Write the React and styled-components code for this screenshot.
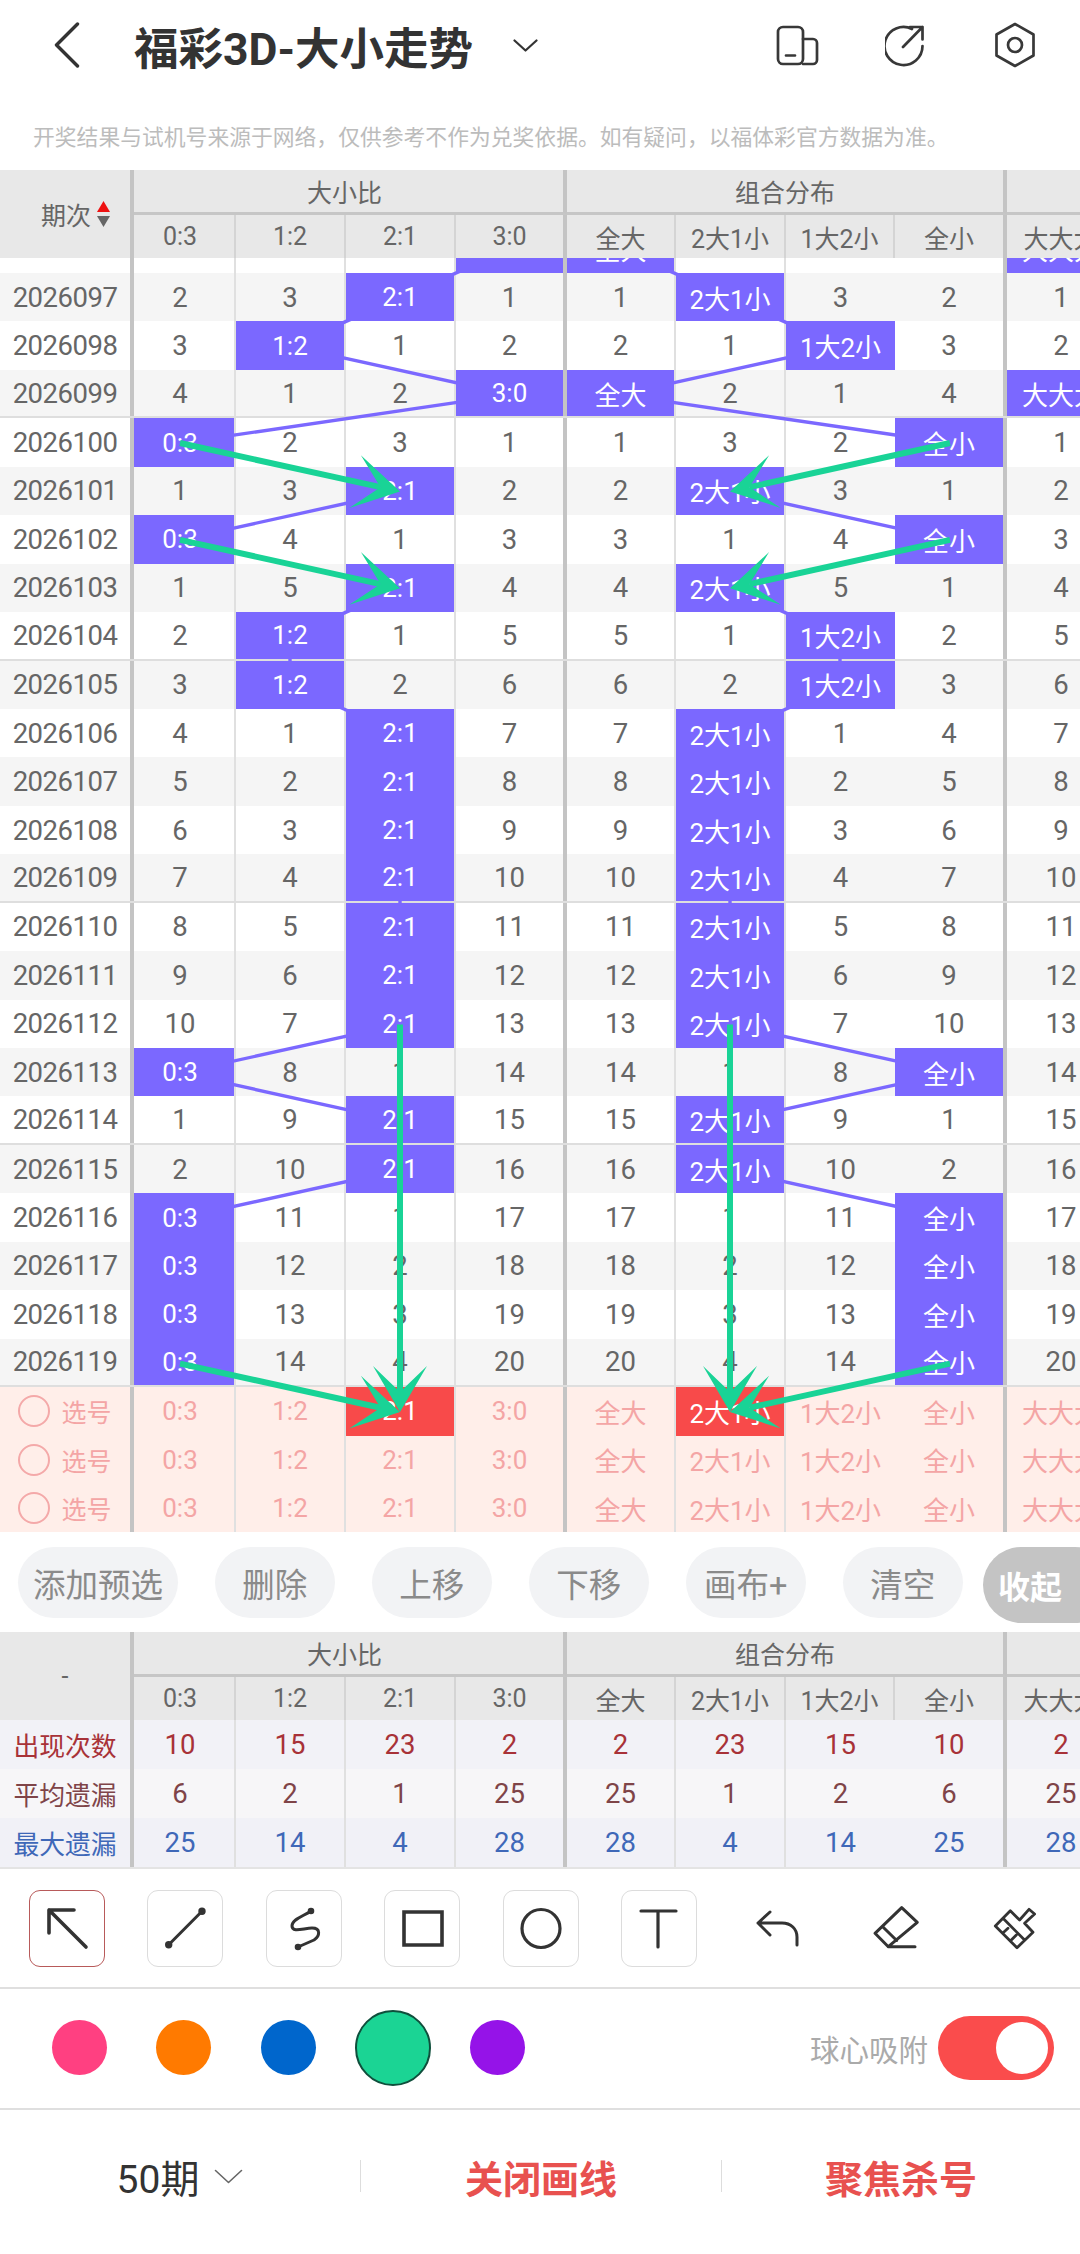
import React from "react";
import styled, { createGlobalStyle } from "styled-components";

const ROW_H = 48.45;
const TRACKS = "126px 110px 110px 110px 111px 109px 110px 109px 112px 110px";
const CENTERS = [180, 290, 400, 510, 620, 730, 840, 950, 1062];
const COLUMNS = ["0:3", "1:2", "2:1", "3:0", "全大", "2大1小", "1大2小", "全小", "大大大"];
const SOURCE = [0, 1, 2, 3, 3, 2, 1, 0, 3];
const HITS = [3, 2, 1, 3, 0, 2, 0, 2, 1, 1, 2, 2, 2, 2, 2, 2, 2, 0, 2, 2, 0, 0, 0, 0];
const STATS = [
  { label: "出现次数", values: [10, 15, 23, 2], color: "#a83238", bg: "#f2f2f7" },
  { label: "平均遗漏", values: [6, 2, 1, 25], color: "#7f4448", bg: "#f7f6f8" },
  { label: "最大遗漏", values: [25, 14, 4, 28], color: "#3f68b8", bg: "#f1f1f7" },
];
const ACTIONS = ["添加预选", "删除", "上移", "下移", "画布+", "清空"];
const SWATCHES = ["#ff4081", "#ff7a00", "#0066cc", "#1bd494", "#9513e8"];

const rowData = (() => {
  const miss = [0, 1, 2, 0];
  return HITS.map((hit, i) => {
    miss.forEach((_, c) => {
      miss[c] = c === hit ? 0 : miss[c] + 1;
    });
    return { issue: 2026096 + i, hit, miss: [...miss] };
  });
})();

const rowCenter = (i) => i * ROW_H + ROW_H / 2;

const GlobalStyle = createGlobalStyle`
  html, body {
    margin: 0;
    padding: 0;
    background: #fff;
  }
  body {
    font-family: Roboto, "Noto Sans CJK SC", sans-serif;
    color: #666;
  }
`;

const Page = styled.div`
  width: 1080px;
  height: 2254px;
  overflow: hidden;
  position: relative;
  background: #fff;
`;

const TopBar = styled.header`
  height: 90px;
  display: flex;
  align-items: center;
  padding: 0 42px 0 54px;
`;

const Title = styled.h1`
  margin: 0 40px 0 54px;
  font-size: 44.5px;
  font-weight: 700;
  color: #333;
  white-space: nowrap;
`;

const TopIcons = styled.div`
  margin-left: auto;
  display: flex;
  gap: 65px;
`;

const Notice = styled.p`
  margin: 0;
  height: 80px;
  padding: 36px 0 0 33px;
  box-sizing: border-box;
  font-size: 21.8px;
  line-height: 24px;
  color: #bcbcbc;
  white-space: nowrap;
`;

const HeadGrid = styled.div`
  display: grid;
  grid-template-columns: ${TRACKS};
  grid-template-rows: 45px 43px;
  width: 1080px;
  overflow: hidden;
  background: #e8e8e8;
  position: relative;
  z-index: 4;
`;

const HeadLabel = styled.div`
  grid-row: 1 / span 2;
  grid-column: 1;
  width: 134px;
  box-sizing: border-box;
  border-right: 4px solid #c4c4c4;
  background: #e8e8e8;
  position: relative;
  z-index: 2;
  display: flex;
  align-items: center;
  justify-content: ${(p) => (p.$center ? "center" : "flex-start")};
  padding-left: ${(p) => (p.$center ? "0" : "41px")};
  font-size: 25px;
  color: #666;
`;

const SortMarks = styled.svg`
  margin-left: 6px;
`;

const GroupCell = styled.div`
  grid-column: span ${(p) => p.$span};
  display: flex;
  align-items: center;
  justify-content: center;
  font-size: 25px;
  color: #666;
  box-sizing: border-box;
  border-bottom: 3px solid #c6c6c6;
  border-right: ${(p) => (p.$edge ? "4px solid #c4c4c4" : "none")};
`;

const SubCell = styled.div`
  display: flex;
  align-items: center;
  justify-content: center;
  font-size: 25px;
  color: #666;
  white-space: nowrap;
  box-sizing: border-box;
  border-right: ${(p) => (p.$edge ? "4px solid #c4c4c4" : "2px solid #d4d4d4")};
`;

const TrendBody = styled.div`
  height: 1275px;
  overflow: hidden;
`;

const Rows = styled.div`
  margin-top: -33.45px;
  position: relative;
  z-index: 0;
`;

const Row = styled.div`
  display: grid;
  grid-template-columns: ${TRACKS};
  width: 1080px;
  height: ${(p) => p.$height || ROW_H}px;
  box-sizing: border-box;
  overflow: hidden;
  background: ${(p) => p.$bg};
  border-bottom: ${(p) => (p.$ruled ? "2px solid #dedede" : "none")};
`;

const LabelCell = styled.div`
  grid-column: 1;
  grid-row: 1;
  width: 134px;
  box-sizing: border-box;
  border-right: 4px solid #c4c4c4;
  background: ${(p) => p.$bg};
  position: relative;
  z-index: 3;
  display: flex;
  align-items: center;
  justify-content: center;
  gap: ${(p) => p.$gap || 0}px;
  font-size: ${(p) => p.$size || 27.5}px;
  letter-spacing: ${(p) => (p.$size ? 0 : -0.5)}px;
  color: ${(p) => p.$color || "#666"};
  white-space: nowrap;
`;

const Cell = styled.div`
  grid-row: 1;
  grid-column: ${(p) => p.$col};
  display: flex;
  align-items: center;
  justify-content: center;
  box-sizing: border-box;
  font-size: ${(p) => (p.$number ? 27.5 : 26)}px;
  color: ${(p) => p.$color || "#666"};
  white-space: nowrap;
  border-right: ${(p) =>
    p.$edge ? "4px solid #c4c4c4" : p.$plain ? "none" : "2px solid #e0e0e0"};
`;

const HitFill = styled.div`
  align-self: stretch;
  flex: 1;
  display: flex;
  align-items: center;
  justify-content: center;
  position: relative;
  z-index: 2;
  color: #fff;
  background: ${(p) => p.$bg};
`;

const Overlay = styled.svg`
  position: absolute;
  left: 0;
  top: 0;
  pointer-events: none;
  z-index: ${(p) => p.$layer};
`;

const PickRing = styled.span`
  width: 28px;
  height: 28px;
  border: 2px solid #f4a9a9;
  border-radius: 50%;
`;

const ActionBar = styled.div`
  height: 99px;
  position: relative;
  display: flex;
  gap: 36.5px;
  padding: 14px 0 0 18px;
  box-sizing: border-box;
`;

const ActionPill = styled.button`
  height: 71px;
  padding: 0 15px;
  min-width: 120.5px;
  border: none;
  border-radius: 36px;
  background: #f2f3f5;
  font: inherit;
  font-size: 32.5px;
  color: #8a8a8a;
`;

const CollapseButton = styled.button`
  position: absolute;
  left: 983px;
  top: 14px;
  width: 130px;
  height: 76px;
  padding: 0 0 0 15px;
  text-align: left;
  border: none;
  border-radius: 38px;
  background: #c4c4c4;
  font: inherit;
  font-size: 32px;
  font-weight: 700;
  color: #fff;
`;

const StatBlock = styled.section`
  border-bottom: 2px solid #e4e4e4;
`;

const ToolBar = styled.div`
  height: 120px;
  box-sizing: border-box;
  display: flex;
  gap: 42.6px;
  padding: 21px 0 0 28.5px;
  border-bottom: 2px solid #dfdfdf;
`;

const ToolButton = styled.button`
  width: 76px;
  height: 77px;
  padding: 0;
  box-sizing: border-box;
  background: #fff;
  border: ${(p) => (p.$bare ? "none" : `1px solid ${p.$active ? "#b85a5a" : "#dcdcdc"}`)};
  border-radius: 11px;
  display: block;
  svg {
    display: block;
    margin: ${(p) => (p.$bare ? "0" : "-1px")};
  }
`;

const ColorBar = styled.div`
  height: 121px;
  box-sizing: border-box;
  display: flex;
  align-items: center;
  padding: 0 26px 2px 27px;
  border-bottom: 2px solid #dfdfdf;
`;

const SwatchSlot = styled.div`
  width: 104.5px;
  display: flex;
  justify-content: center;
`;

const Swatch = styled.span`
  display: block;
  box-sizing: border-box;
  width: ${(p) => (p.$active ? 76 : 55)}px;
  height: ${(p) => (p.$active ? 76 : 55)}px;
  border-radius: 50%;
  background: ${(p) => p.$color};
  border: ${(p) => (p.$active ? "2px solid #0f4f3c" : "none")};
`;

const SnapGroup = styled.div`
  margin-left: auto;
  display: flex;
  align-items: center;
  gap: 10px;
  font-size: 29.5px;
  color: #aaa;
`;

const Toggle = styled.span`
  width: 116px;
  height: 64px;
  box-sizing: border-box;
  padding: 6px;
  border-radius: 32px;
  background: #fa4c4c;
  display: flex;
  justify-content: flex-end;
  &::after {
    content: "";
    width: 52px;
    height: 52px;
    border-radius: 50%;
    background: #fff;
  }
`;

const BottomBar = styled.div`
  display: grid;
  grid-template-columns: 360px 361px 359px;
  padding-top: 50px;
`;

const BottomItem = styled.div`
  height: 32px;
  display: flex;
  align-items: center;
  justify-content: center;
  gap: 15px;
  font-size: ${(p) => (p.$accent ? 38 : 39)}px;
  font-weight: ${(p) => (p.$accent ? 700 : 400)};
  color: ${(p) => (p.$accent ? "#e8514f" : "#333")};
  border-left: ${(p) => (p.$split ? "1px solid #ddd" : "none")};
`;

function Caret({ width, height, stroke, strokeWidth }) {
  return (
    <svg width={width} height={height} viewBox={`0 0 ${width} ${height}`} fill="none">
      <path
        d={`M1.5 1.5L${width / 2} ${height - 1.5}L${width - 1.5} 1.5`}
        stroke={stroke}
        strokeWidth={strokeWidth}
        strokeLinecap="round"
        strokeLinejoin="round"
      />
    </svg>
  );
}

function TopIcon({ children }) {
  return (
    <svg
      width="44"
      height="46"
      viewBox="0 0 44 46"
      fill="none"
      stroke="#383838"
      strokeWidth="2.7"
      strokeLinecap="round"
      strokeLinejoin="round"
    >
      {children}
    </svg>
  );
}

function ToolIcon({ children, strokeWidth = 3 }) {
  return (
    <svg
      width="76"
      height="77"
      viewBox="0 0 76 77"
      fill="none"
      stroke="#333"
      strokeWidth={strokeWidth}
      strokeLinecap="round"
      strokeLinejoin="round"
    >
      {children}
    </svg>
  );
}

const TOOLS = [
  {
    active: true,
    icon: (
      <ToolIcon strokeWidth={3.6}>
        <path d="M45 20H20V43M20 20L57 57" />
      </ToolIcon>
    ),
  },
  {
    icon: (
      <ToolIcon>
        <path d="M21.7 54.7L55 21.3" />
        <circle cx="21.7" cy="54.7" r="2.2" fill="#333" />
        <circle cx="55" cy="21.3" r="2.2" fill="#333" />
      </ToolIcon>
    ),
  },
  {
    icon: (
      <ToolIcon>
        <path d="M45 21C38 26 26 29 26 36C26 43 38 38 46 38C55 38 54 46 48 50L32 57" />
        <circle cx="45" cy="21" r="1.8" fill="#333" />
        <circle cx="32" cy="57" r="1.8" fill="#333" />
      </ToolIcon>
    ),
  },
  {
    icon: (
      <ToolIcon strokeWidth={3.6}>
        <path d="M20 22H58V55H20Z" strokeLinecap="butt" strokeLinejoin="miter" />
      </ToolIcon>
    ),
  },
  {
    icon: (
      <ToolIcon strokeWidth={3.2}>
        <circle cx="38" cy="38.5" r="19" />
      </ToolIcon>
    ),
  },
  {
    icon: (
      <ToolIcon strokeWidth={3.2}>
        <path d="M20 21H55M37 21V57" />
      </ToolIcon>
    ),
  },
  {
    bare: true,
    icon: (
      <ToolIcon>
        <path d="M30 22L18 33L30 45M18 33H42C51 33 57 39 57 47V55" />
      </ToolIcon>
    ),
  },
  {
    bare: true,
    icon: (
      <ToolIcon>
        <path d="M42.7 17.7L58.3 32.3L29.3 56.7L16 43.3ZM23.7 36.7L37.7 50.5M29.3 56.7H56" />
      </ToolIcon>
    ),
  },
  {
    bare: true,
    icon: (
      <ToolIcon strokeWidth={2.8}>
        <path d="M33.3 20.7L42.6 30L52 19.3L57.6 24L47.6 33.3L56 42.3L40 57.7L18.3 36ZM26 28.3L47.6 50M25.6 43.3L31 38.3M33.3 51L39.3 45" />
      </ToolIcon>
    ),
  },
];

function TableHead({ label, center }) {
  return (
    <HeadGrid>
      <HeadLabel $center={center}>{label}</HeadLabel>
      <GroupCell $span={4} $edge>
        大小比
      </GroupCell>
      <GroupCell $span={4} $edge>
        组合分布
      </GroupCell>
      <GroupCell $span={1} />
      {COLUMNS.map((name, c) => (
        <SubCell key={name} $edge={c === 3 || c === 7}>
          {name}
        </SubCell>
      ))}
    </HeadGrid>
  );
}

function ValueCell({ column, children, color, hitColor, number }) {
  return (
    <Cell
      $col={column + 2}
      $edge={column === 3 || column === 7}
      $plain={column === 6}
      $color={color}
      $number={number}
    >
      {hitColor ? <HitFill $bg={hitColor}>{children}</HitFill> : children}
    </Cell>
  );
}

function TrendLines({ height }) {
  const segments = [];
  rowData.slice(0, -1).forEach((row, i) => {
    const next = rowData[i + 1];
    [0, 1].forEach((group) => {
      const from = group === 0 ? row.hit : 7 - row.hit;
      const to = group === 0 ? next.hit : 7 - next.hit;
      segments.push([CENTERS[from], rowCenter(i), CENTERS[to], rowCenter(i + 1)]);
    });
  });
  return (
    <Overlay $layer={1} width="1080" height={height} viewBox={`0 0 1080 ${height}`}>
      {segments.map(([x1, y1, x2, y2], i) => (
        <line key={i} x1={x1} y1={y1} x2={x2} y2={y2} stroke="#7b68ff" strokeWidth="3.4" />
      ))}
    </Overlay>
  );
}

function Arrow({ from, to }) {
  const dx = to[0] - from[0];
  const dy = to[1] - from[1];
  const len = Math.hypot(dx, dy);
  const ux = dx / len;
  const uy = dy / len;
  const at = (back, side) => [to[0] - ux * back - uy * side, to[1] - uy * back + ux * side];
  const head = [at(0, 0), at(46, 27), at(20, 0), at(46, -27)];
  const neck = at(20, 0);
  return (
    <g fill="#19d396" stroke="none">
      <line x1={from[0]} y1={from[1]} x2={neck[0]} y2={neck[1]} stroke="#19d396" strokeWidth="6" />
      <polygon points={head.map((p) => p.join(",")).join(" ")} />
    </g>
  );
}

function DrawnArrows({ height }) {
  const pos = (column, i) => [CENTERS[column], rowCenter(i)];
  const pickRow = rowData.length;
  return (
    <Overlay $layer={4} width="1080" height={height} viewBox={`0 0 1080 ${height}`}>
      <Arrow from={pos(0, 4)} to={pos(2, 5)} />
      <Arrow from={pos(0, 6)} to={pos(2, 7)} />
      <Arrow from={pos(7, 4)} to={pos(5, 5)} />
      <Arrow from={pos(7, 6)} to={pos(5, 7)} />
      <Arrow from={pos(2, 16)} to={pos(2, pickRow)} />
      <Arrow from={pos(5, 16)} to={pos(5, pickRow)} />
      <Arrow from={pos(0, 23)} to={pos(2, pickRow)} />
      <Arrow from={pos(7, 23)} to={pos(5, pickRow)} />
    </Overlay>
  );
}

function TrendRow({ row, index }) {
  const bg = index % 2 === 1 ? "#f5f5f5" : "#fff";
  return (
    <Row $bg={bg} $ruled={(row.issue + 1) % 5 === 0}>
      <LabelCell $bg={bg}>{row.issue}</LabelCell>
      {COLUMNS.map((name, c) => {
        const isHit = row.miss[SOURCE[c]] === 0;
        return (
          <ValueCell key={name} column={c} number={!isHit} hitColor={isHit ? "#7b68ff" : null}>
            {isHit ? name : row.miss[SOURCE[c]]}
          </ValueCell>
        );
      })}
    </Row>
  );
}

function PickRow({ marked }) {
  return (
    <Row $bg="#ffeee9">
      <LabelCell $bg="#ffeee9" $color="#f4a5a5" $size={25} $gap={11}>
        <PickRing />
        选号
      </LabelCell>
      {COLUMNS.map((name, c) => {
        const isMarked = marked && (c === 2 || c === 5);
        return (
          <ValueCell key={name} column={c} color="#f4a5a5" hitColor={isMarked ? "#f84a4a" : null}>
            {name}
          </ValueCell>
        );
      })}
    </Row>
  );
}

export default function App() {
  const rowsHeight = (rowData.length + 3) * ROW_H;
  return (
    <Page>
      <GlobalStyle />
      <TopBar>
        <svg width="26" height="46" viewBox="0 0 26 46" fill="none">
          <path
            d="M23.5 2L2.5 23L23.5 44"
            stroke="#333"
            strokeWidth="3.4"
            strokeLinecap="round"
            strokeLinejoin="round"
          />
        </svg>
        <Title>福彩3D-大小走势</Title>
        <Caret width={25} height={13} stroke="#333" strokeWidth={2.2} />
        <TopIcons>
          <TopIcon>
            <rect x="2" y="5" width="25" height="37" rx="5" />
            <path d="M27 17H37A4 4 0 0 1 41 21V38A4 4 0 0 1 37 42H27M10 33.5H19" />
          </TopIcon>
          <TopIcon>
            <path d="M27 7A19 19 0 1 0 37.5 24M18 25L37.5 5M25 5H37.5V17.5" />
          </TopIcon>
          <TopIcon>
            <path d="M21 2L39.5 12.5V33.5L21 44L2.5 33.5V12.5Z" />
            <circle cx="21" cy="23" r="7" />
          </TopIcon>
        </TopIcons>
      </TopBar>
      <Notice>开奖结果与试机号来源于网络，仅供参考不作为兑奖依据。如有疑问，以福体彩官方数据为准。</Notice>

      <TableHead
        label={
          <>
            期次
            <SortMarks width="13" height="26" viewBox="0 0 13 26">
              <path d="M6.5 0L13 11H0Z" fill="#ee1111" />
              <path d="M0 15H13L6.5 26Z" fill="#666" />
            </SortMarks>
          </>
        }
      />
      <TrendBody>
        <Rows>
          {rowData.map((row, i) => (
            <TrendRow key={row.issue} row={row} index={i} />
          ))}
          <PickRow marked />
          <PickRow />
          <PickRow />
          <TrendLines height={rowsHeight} />
          <DrawnArrows height={rowsHeight} />
        </Rows>
      </TrendBody>

      <ActionBar>
        {ACTIONS.map((name) => (
          <ActionPill key={name}>{name}</ActionPill>
        ))}
        <CollapseButton>收起</CollapseButton>
      </ActionBar>

      <StatBlock>
        <TableHead label="-" center />
        {STATS.map((stat) => (
          <Row key={stat.label} $bg={stat.bg} $height={49}>
            <LabelCell $bg={stat.bg} $color={stat.color} $size={25.8}>
              {stat.label}
            </LabelCell>
            {COLUMNS.map((name, c) => (
              <ValueCell key={name} column={c} color={stat.color} number>
                {stat.values[SOURCE[c]]}
              </ValueCell>
            ))}
          </Row>
        ))}
      </StatBlock>

      <ToolBar>
        {TOOLS.map((tool, i) => (
          <ToolButton key={i} $active={tool.active} $bare={tool.bare}>
            {tool.icon}
          </ToolButton>
        ))}
      </ToolBar>

      <ColorBar>
        {SWATCHES.map((color, i) => (
          <SwatchSlot key={color}>
            <Swatch $color={color} $active={i === 3} />
          </SwatchSlot>
        ))}
        <SnapGroup>
          球心吸附
          <Toggle />
        </SnapGroup>
      </ColorBar>

      <BottomBar>
        <BottomItem>
          50期
          <Caret width={29} height={15} stroke="#666" strokeWidth={1.6} />
        </BottomItem>
        <BottomItem $accent $split>
          关闭画线
        </BottomItem>
        <BottomItem $accent $split>
          聚焦杀号
        </BottomItem>
      </BottomBar>
    </Page>
  );
}
